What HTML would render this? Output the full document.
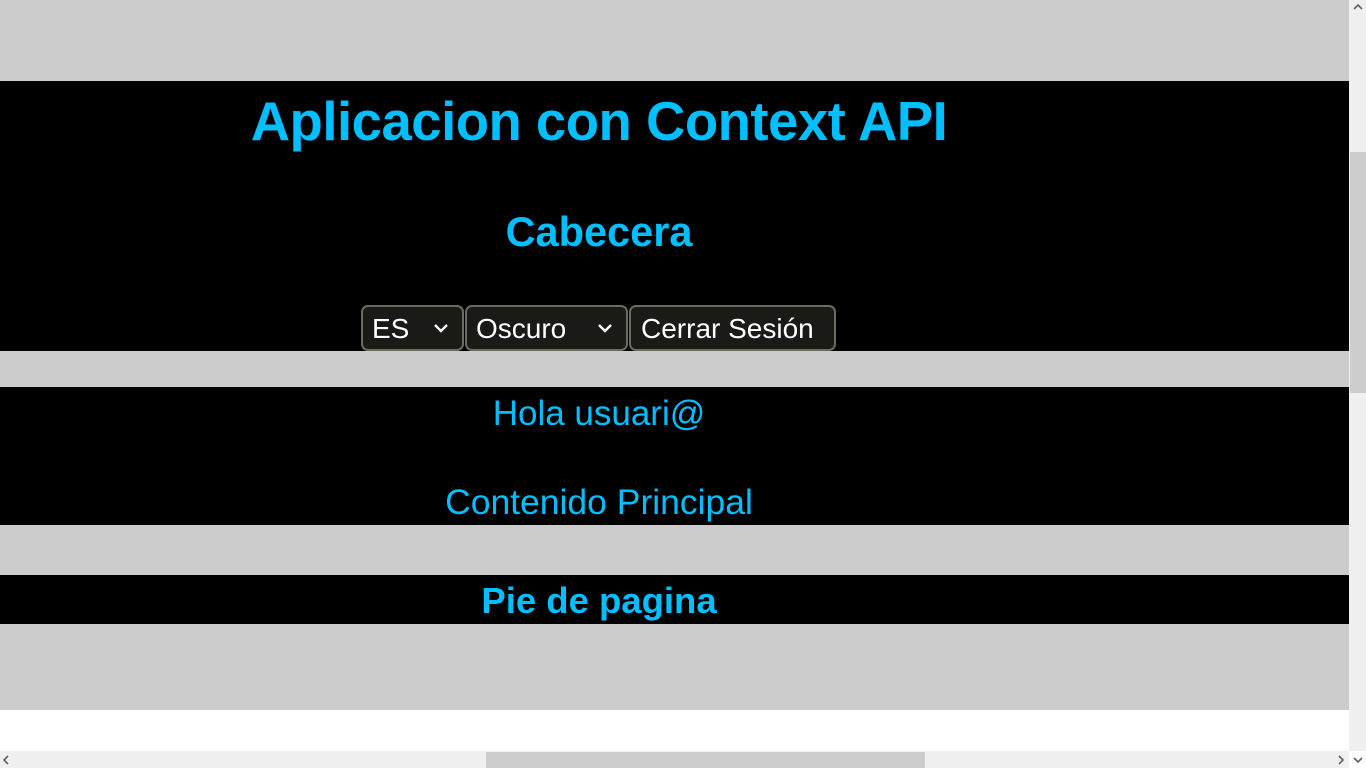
<!DOCTYPE html>
<html><head><meta charset="utf-8"><style>
html,body{margin:0;padding:0;width:1366px;height:768px;overflow:hidden;background:#fff;font-family:"Liberation Sans",sans-serif}
.a{position:absolute}
.bk{position:absolute;left:0;width:1349px;background:#000}
.t{position:absolute;left:0;width:1198px;text-align:center;color:#00bfff;white-space:nowrap}
.ctl{position:absolute;top:305px;height:42px;background:#1a1a17;border:2px solid #6b6b60;border-radius:7px;color:#fff;font-size:28px;line-height:42px;box-sizing:content-box}
.ctl span{position:absolute;left:9px;top:1px}
.chev{position:absolute;top:16px;width:16px;height:10px}
</style></head><body>
<div class="a" style="left:0;top:0;width:1349px;height:710px;background:#ccc"></div>
<div class="bk" style="top:81px;height:270px"></div>
<div class="bk" style="top:387px;height:138px"></div>
<div class="bk" style="top:575px;height:49px"></div>
<div class="t" style="top:89px;font-size:54.5px;font-weight:bold;line-height:66px;letter-spacing:-0.5px">Aplicacion con Context API</div>
<div class="t" style="top:208px;font-size:41.5px;font-weight:bold;line-height:48px">Cabecera</div>
<div class="ctl" style="left:361px;width:99px"><span>ES</span><svg class="chev" style="left:70px" viewBox="0 0 16 10"><path d="M2 2l6 6 6-6" stroke="#fff" stroke-width="2.4" fill="none"/></svg></div>
<div class="ctl" style="left:465px;width:159px"><span>Oscuro</span><svg class="chev" style="left:130px" viewBox="0 0 16 10"><path d="M2 2l6 6 6-6" stroke="#fff" stroke-width="2.4" fill="none"/></svg></div>
<div class="ctl" style="left:629px;width:203px"><span style="left:10px">Cerrar Sesión</span></div>
<div class="t" style="top:392px;font-size:35px;line-height:44px">Hola usuari@</div>
<div class="t" style="top:480px;font-size:35.5px;line-height:44px">Contenido Principal</div>
<div class="t" style="top:580px;font-size:36.5px;font-weight:bold;line-height:42px">Pie de pagina</div>
<div class="a" style="left:1349px;top:0;width:17px;height:751px;background:#f0f0f0"></div>
<div class="a" style="left:1350px;top:152px;width:16px;height:241px;background:#cdcdcd"></div>
<svg class="a" style="left:1352px;top:3px" width="12" height="8" viewBox="0 0 12 8"><path d="M2 6l4-4 4 4" stroke="#606060" stroke-width="1.6" fill="none"/></svg>
<svg class="a" style="left:1352px;top:756px" width="12" height="8" viewBox="0 0 12 8"><path d="M2 2l4 4 4-4" stroke="#606060" stroke-width="1.6" fill="none"/></svg>
<div class="a" style="left:0;top:751px;width:1349px;height:17px;background:#f0f0f0"></div>
<div class="a" style="left:486px;top:752px;width:439px;height:16px;background:#cdcdcd"></div>
<svg class="a" style="left:2px;top:754px" width="8" height="12" viewBox="0 0 8 12"><path d="M6 2l-4 4 4 4" stroke="#606060" stroke-width="1.6" fill="none"/></svg>
<svg class="a" style="left:1337px;top:754px" width="8" height="12" viewBox="0 0 8 12"><path d="M2 2l4 4-4 4" stroke="#606060" stroke-width="1.6" fill="none"/></svg>
</body></html>
